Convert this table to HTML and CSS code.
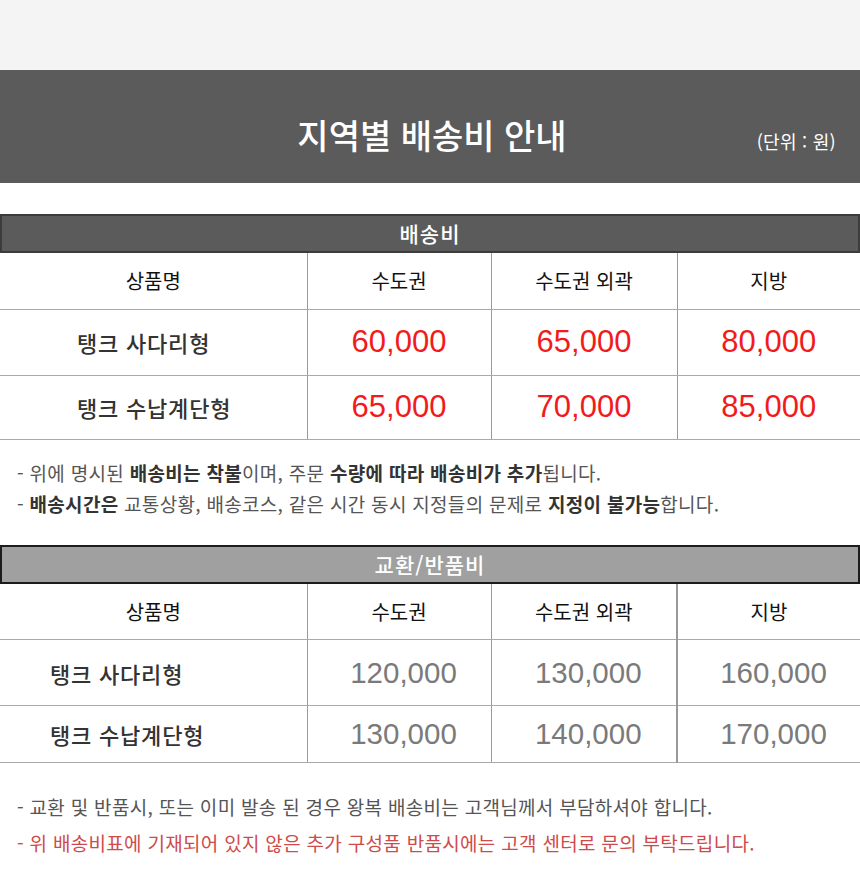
FILE: index.html
```html
<!DOCTYPE html>
<html lang="ko">
<head>
<meta charset="utf-8">
<title>지역별 배송비 안내</title>
<link rel="stylesheet" href="styles.css">
</head>
<body>
<div class="topstrip"></div>
<header class="hero">
  <span></span>
  <h1 class="hero-title">지역별 배송비 안내</h1>
  <span class="hero-unit">(단위 : 원)</span>
</header>

<section class="block block-ship">
  <div class="bar bar-dark">배송비</div>
  <table class="fee">
    <colgroup><col class="c1"><col class="c2"><col class="c3"><col class="c4"></colgroup>
    <tr class="head"><th>상품명</th><th>수도권</th><th>수도권 외곽</th><th>지방</th></tr>
    <tr class="row r1"><td class="name">탱크 사다리형</td><td class="num red">60,000</td><td class="num red">65,000</td><td class="num red">80,000</td></tr>
    <tr class="row r2"><td class="name">탱크 수납계단형</td><td class="num red">65,000</td><td class="num red">70,000</td><td class="num red">85,000</td></tr>
  </table>
  <ul class="notes notes-a">
    <li>- 위에 명시된 <b>배송비는 착불</b>이며, 주문 <b>수량에 따라 배송비가 추가</b>됩니다.</li>
    <li>- <b>배송시간은</b> 교통상황, 배송코스, 같은 시간 동시 지정들의 문제로 <b>지정이 불가능</b>합니다.</li>
  </ul>
</section>

<section class="block block-return">
  <div class="bar bar-light">교환/반품비</div>
  <table class="fee fee-return">
    <colgroup><col class="c1"><col class="c2"><col class="c3"><col class="c4"></colgroup>
    <tr class="head"><th>상품명</th><th>수도권</th><th>수도권 외곽</th><th class="thick">지방</th></tr>
    <tr class="row r1"><td class="name">탱크 사다리형</td><td class="num gray">120,000</td><td class="num gray">130,000</td><td class="num gray thick">160,000</td></tr>
    <tr class="row r2"><td class="name">탱크 수납계단형</td><td class="num gray">130,000</td><td class="num gray">140,000</td><td class="num gray thick">170,000</td></tr>
  </table>
  <ul class="notes notes-b">
    <li>- 교환 및 반품시, 또는 이미 발송 된 경우 왕복 배송비는 고객님께서 부담하셔야 합니다.</li>
    <li class="warn">- 위 배송비표에 기재되어 있지 않은 추가 구성품 반품시에는 고객 센터로 문의 부탁드립니다.</li>
  </ul>
</section>
</body>
</html>
```

FILE: styles.css
```css
* { box-sizing: border-box; }
html, body { margin: 0; padding: 0; background: #fff; }
body {
  width: 860px;
  font-family: "Noto Sans CJK KR", "Noto Sans", sans-serif;
  color: #222;
}
.topstrip { height: 70px; background: #f4f4f4; }

.hero {
  height: 113px;
  background: #5b5b5b;
  color: #fff;
  display: grid;
  grid-template-columns: 1fr auto 1fr;
  align-items: baseline;
  padding-top: 45px;
}
.hero-title {
  margin: 0;
  font-size: 34px;
  line-height: 40px;
  font-weight: 500;
  padding-left: 4px;
}
.hero-unit {
  justify-self: end;
  font-size: 18px;
  line-height: 20px;
  padding-right: 24px;
  letter-spacing: 0.3px;
}

.block-ship { margin-top: 31px; }
.block-return { margin-top: 26px; }

.bar {
  height: 39px;
  line-height: 35px;
  text-align: center;
  color: #fff;
  font-size: 21px;
  font-weight: 500;
  letter-spacing: 1px;
  border: 2px solid #3a3a3a;
}
.bar-dark { background: #5b5b5b; border-color: #3c3c3c; }
.bar-light { background: #a0a0a0; border-color: #1c1c1c; }

.fee {
  width: 860px;
  border-collapse: collapse;
  table-layout: fixed;
}
.c1 { width: 307px; }
.c2 { width: 184px; }
.c3 { width: 186px; }
.c4 { width: 183px; }
.fee th, .fee td {
  border-bottom: 1px solid #a9a9a9;
  border-left: 1px solid #9a9a9a;
  padding: 0;
  text-align: center;
}
.fee th:first-child, .fee td:first-child { border-left: none; }
.fee .head th {
  height: 56px;
  font-size: 20px;
  font-weight: 400;
  color: #111;
}
.fee .r1 td { height: 66px; }
.fee .r2 td { height: 64px; }
.fee-return .head th { height: 56px; }
.fee-return .r1 td { height: 66px; }
.fee-return .r2 td { height: 57px; }
.fee-return .thick { border-left: 2px solid #9a9a9a; }

.fee td.name {
  text-align: left;
  padding-left: 77px;
  font-size: 22px;
  font-weight: 500;
  color: #333;
  letter-spacing: 0.8px;
}
.fee-return td.name { padding-left: 50px; }
.fee td.num {
  font-family: "Liberation Sans", Arial, sans-serif;
  font-size: 31px;
}
.fee td.red { color: #f21b1b; }
.fee td.gray { color: #7a7a7a; font-size: 29.5px; padding-left: 9px; }

.notes {
  list-style: none;
  margin: 0;
  padding: 0 0 0 17px;
  font-size: 19px;
  color: #555;
  letter-spacing: 0.3px;
}
.notes b { color: #333; font-weight: 700; }
.notes-a { margin-top: 17px; line-height: 31px; }
.notes-b { margin-top: 26px; line-height: 36px; }
.notes .warn { color: #cf4a4a; }
```
